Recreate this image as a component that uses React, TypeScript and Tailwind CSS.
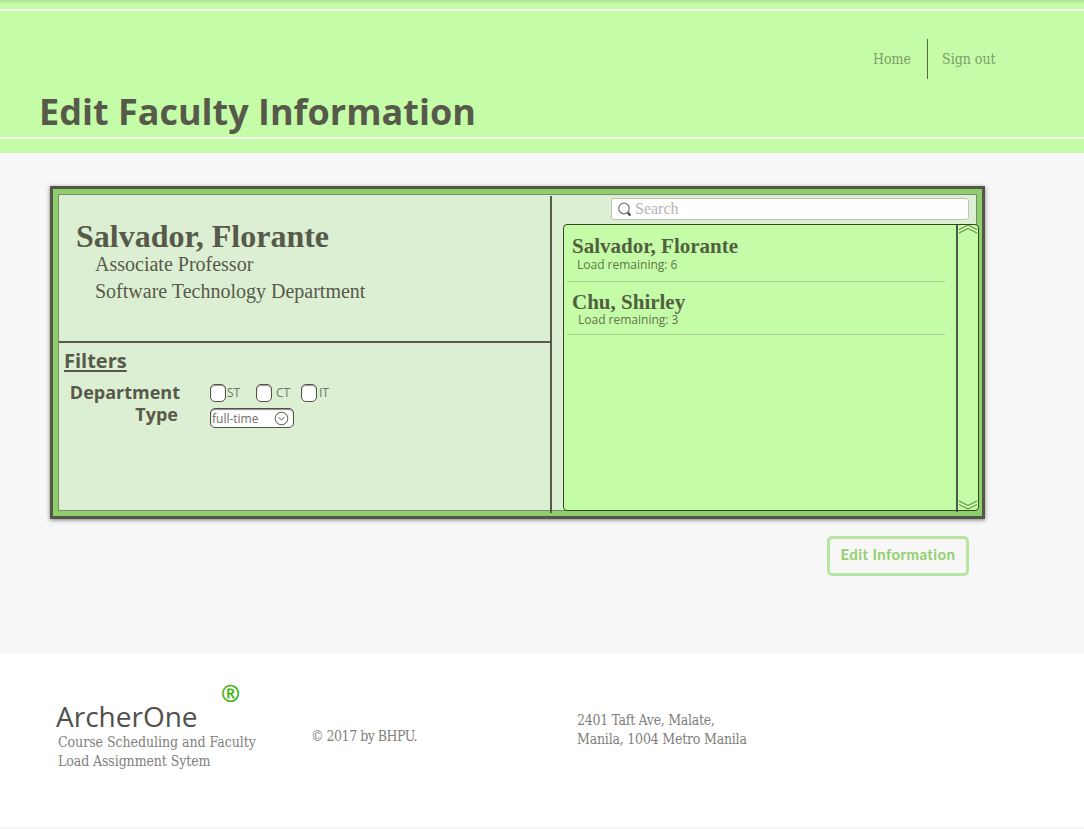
const slab = "font-['DejaVu_Serif','Liberation_Serif',serif] [font-stretch:condensed]";
const sans = "font-['Open_Sans','Noto_Sans',sans-serif] [font-stretch:normal]";
const serif = "font-['Liberation_Serif',serif]";

function Header() {
  return (
    <header className="flex h-[153px] flex-col bg-[#c5fca7] bg-[linear-gradient(#acdf90,#c5fca7_4px)]">
      <div className="mt-[9px] h-0.5 shrink-0 bg-[#f4fff0]" />
      <div className="flex h-[126px] shrink-0 items-start justify-between pr-[89px] pl-[39px]">
        <h1 className={`${sans} mt-[76px] text-[36px] leading-[50px] font-bold whitespace-nowrap text-[#575a4b]`}>
          Edit Faculty Information
        </h1>
        <nav className={`${slab} mt-7 flex h-10 text-[14px] leading-[41px] whitespace-nowrap text-[#7c9c69]`}>
          <a className="w-[54px]">Home</a>
          <span className="w-px bg-[#4f6a3c]" />
          <a className="ml-3.5 w-[53px]">Sign out</a>
        </nav>
      </div>
      <div className="h-0.5 shrink-0 bg-[#f4fff0]" />
    </header>
  );
}

function Checkbox({ label, className, labelClass }: { label: string; className: string; labelClass: string }) {
  return (
    <label className={`flex items-center ${className}`}>
      <span className="h-[18px] w-4 shrink-0 rounded-[5px] border border-[#4f5247] bg-white shadow-[inset_0_1px_1px_#999]" />
      <span className={`${sans} text-[12px] leading-[18px] text-[#6d7566] ${labelClass}`}>{label}</span>
    </label>
  );
}

function Details() {
  return (
    <section className="flex w-[491px] shrink-0 flex-col">
      <div className={`${serif} h-[146px] pt-[24px] pl-[17px] whitespace-nowrap text-[#575a4b]`}>
        <h2 className="text-[32px] leading-[34px] font-bold">Salvador, Florante</h2>
        <p className="mt-[-2px] pl-[19px] text-[20px] leading-[27px]">Associate Professor</p>
        <p className="pl-[19px] text-[20px] leading-[27px]">Software Technology Department</p>
      </div>
      <div className="h-0.5 shrink-0 bg-[#575a4b]" />
      <div className={`${sans} text-[#575a4b]`}>
        <h3 className="mt-1 ml-[5px] text-[20px] leading-7 font-bold underline decoration-2 underline-offset-2">Filters</h3>
        <div className="mt-1.5 flex h-[22px] items-center">
          <span className="w-[121px] text-right text-[18px] leading-[22px] font-bold">Department</span>
          <Checkbox label="ST" className="mt-0.5 ml-[30px] w-[46px]" labelClass="ml-[1px]" />
          <Checkbox label="CT" className="mt-0.5 w-[45px]" labelClass="ml-1" />
          <Checkbox label="IT" className="mt-0.5 w-[40px]" labelClass="ml-0.5" />
        </div>
        <div className="flex">
          <span className="w-[119px] text-right text-[18px] leading-[22px] font-bold">Type</span>
          <div className="mt-[5px] ml-8 flex h-5 w-[84px] items-center justify-between rounded-[5px] border border-[#4f5247] bg-white pr-1 pl-px shadow-[inset_0_1px_1px_#888]">
            <span className="mt-0.5 text-[12px] leading-[18px] text-[#6d6f68]">full-time</span>
            <svg width="15" height="15" viewBox="0 0 15 15" fill="none" stroke="#575a4b">
              <circle cx="7.5" cy="7.5" r="6.3" />
              <path d="M4.5 6.3 7.5 9l3-2.7" />
            </svg>
          </div>
        </div>
      </div>
    </section>
  );
}

function Chevrons({ className }: { className: string }) {
  return (
    <svg className={className} width="20" height="10" viewBox="0 0 20 10" fill="none" stroke="#55793f" strokeWidth="1">
      <path d="M1 5.5 10 1l9 4.5M1 9l9-4.5L19 9" />
    </svg>
  );
}

function Person({ name, load, className, loadClass }: { name: string; load: number; className: string; loadClass: string }) {
  return (
    <li className={`mr-[11px] ml-[3px] flex flex-col border-b border-[#a8cf92] pl-[5px] whitespace-nowrap ${className}`}>
      <span className={`${serif} text-[21px] leading-6 font-bold text-[#51603f]`}>{name}</span>
      <span className={`${sans} text-[12px] leading-4 text-[#5c7648] ${loadClass}`}>Load remaining: {load}</span>
    </li>
  );
}

function Directory() {
  return (
    <section className="ml-[11px] flex w-[416px] shrink-0 flex-col pt-[3px]">
      <div className={`${serif} ml-12 flex h-[22px] w-[358px] shrink-0 items-center rounded-[3px] border border-[#b9c9ae] bg-white pl-[5px] text-[16px] text-[#b5b5b5]`}>
        <svg width="16" height="17" viewBox="0 0 16 17" fill="none">
          <circle cx="7" cy="7.5" r="5.3" stroke="#777" strokeWidth="1.2" />
          <path d="m10.5 11.5.8.9" stroke="#777" strokeWidth="1.2" />
          <path d="m11.6 12.5 1 1.2" stroke="#555" strokeWidth="2.6" strokeLinecap="round" />
        </svg>
        <span className="ml-0.5">Search</span>
      </div>
      <div className="mt-1 -mb-px flex h-[287px] shrink-0 rounded-sm border border-[#33481f] bg-[#c5fca7]">
        <ul className="w-[392px]">
          <Person name="Salvador, Florante" load={6} className="h-[57px] pt-[9px]" loadClass="mt-[-1px] ml-[5px]" />
          <Person name="Chu, Shirley" load={3} className="h-[53px] pt-2" loadClass="mt-[-2px] ml-1.5" />
        </ul>
        <div className="h-[287px] w-0.5 bg-[#4c5a43]" />
        <div className="flex w-5 flex-col justify-between">
          <Chevrons className="-mt-px" />
          <Chevrons className="rotate-180" />
        </div>
      </div>
    </section>
  );
}

function Footer() {
  return (
    <footer className={`${slab} flex h-[174px] items-start bg-white text-[14px] leading-[19px] whitespace-nowrap text-[#7f807c]`}>
      <div className="w-[256px] shrink-0 pl-[56px]">
        <div className={`${sans} flex h-[80px]`}>
          <span className="mt-[45px] w-[165px] text-[28px] leading-9 text-[#50514d]">ArcherOne</span>
          <span className="mt-[26px] text-[23px] leading-7 font-bold text-[#43b20d]">®</span>
        </div>
        <p className="pl-[2px] tracking-[-0.05px]">
          Course Scheduling and Faculty<br />
          <span className="tracking-[-0.1px]">Load Assignment Sytem</span>
        </p>
      </div>
      <p className="mt-[74px] ml-[55px] w-[266px] shrink-0 tracking-[-0.5px]">© 2017 by BHPU.</p>
      <p className="mt-[58px] tracking-[-0.3px]">
        2401 Taft Ave, Malate,<br />
        <span className="tracking-[-0.22px]">Manila, 1004 Metro Manila</span>
      </p>
    </footer>
  );
}

export default function App() {
  return (
    <div className="h-[829px] w-[1084px] overflow-hidden bg-[#f7f7f7]">
      <Header />
      <main className="flex h-[500px] flex-col pt-[33px] pl-[50px]">
        <div className="h-[333px] w-[935px] shrink-0 border-[3px] border-[#555849] bg-[#8fce6c] p-[5px] shadow-[0_1px_4px_rgba(0,0,0,0.5)]">
          <div className="flex h-[317px] w-[919px] border border-[#7b8b70] bg-[#dcefd2]">
            <Details />
            <div className="mt-px h-[317px] w-0.5 shrink-0 bg-[#575a4b]" />
            <Directory />
          </div>
        </div>
        <button className="mt-[17px] ml-[777px] h-10 w-[142px] shrink-0 rounded-[5px] border-[3px] border-[#b9e5a3] pb-1 font-['Lato',sans-serif] text-[15px] leading-5 font-bold tracking-[0.4px] whitespace-nowrap text-[#91d06e]">
          Edit Information
        </button>
      </main>
      <Footer />
    </div>
  );
}
